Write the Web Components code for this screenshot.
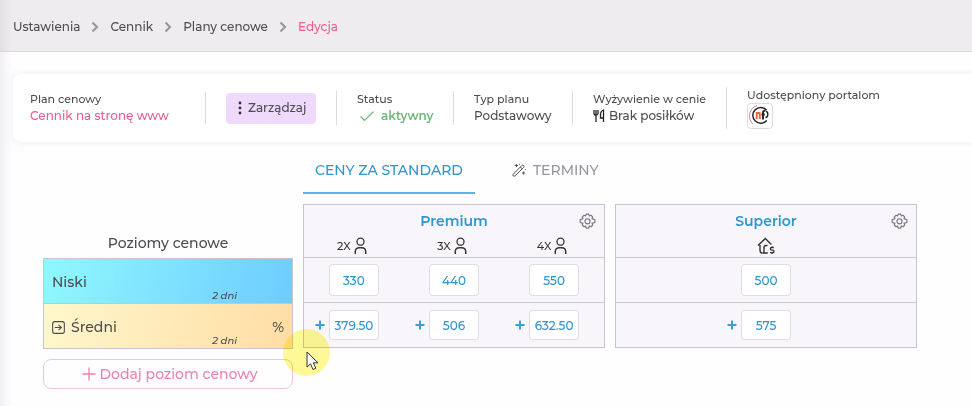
<!DOCTYPE html>
<html lang="pl">
<head>
<meta charset="utf-8">
<title>Edycja planu cenowego</title>
<style>
  body {
    margin: 0;
    min-height: 100vh;
    background: linear-gradient(90deg, #f0eef1, #fefdff 12px);
    color: #4c4b4f;
    font-family: Montserrat, Inter, "Noto Sans", sans-serif;
    font-size: 12px;
    line-height: 16px;
    --blue: #2f95cd;
    --pink: #ea5c90;
    --line: #c8c6cb;
  }
</style>
</head>
<body>
<price-page></price-page>
<script>
const ICONS = {
  chevron: ['0 0 8 12', 8, 12, '<path d="M1.500 1.500 6 6l-4.500 4.500" stroke="#96949a" stroke-width="2"/>'],
  dots: ['0 0 4 14', 4, 14, '<g fill="#333" stroke="none"><circle cx="2" cy="2" r="1.400"/><circle cx="2" cy="7" r="1.400"/><circle cx="2" cy="12" r="1.400"/></g>'],
  check: ['0 0 16 12', 16, 12, '<path d="m1.500 6.500 4 4L14.500 1.500" stroke-width="1.200"/>'],
  food: ['0 0 12 14', 12, 14, '<path d="M1 1v3.500Q1 6 3 6t2-1.500V1M3 1v12M10.500 13V1Q7.500 2 7.500 6v3h3" stroke-width="1.300" stroke="#222"/>'],
  enter: ['0 0 12 12', 13, 13, '<rect x=".6" y=".6" width="10.800" height="10.800" rx="2"/><path d="M2.500 6h6M6 3.500 8.700 6 6 8.500"/>'],
  plus: ['0 0 14 14', 14, 14, '<path d="M7 .5v13M.5 7h13" stroke-width="1.300"/>'],
  add: ['0 0 10 10', 10, 10, '<path d="M5 .5v9M.5 5h9" stroke-width="2"/>'],
  person: ['0 0 12 18', 13, 18, '<circle cx="6" cy="4.700" r="3.500" stroke-width="1.300"/><path d="M.8 17v-2.200q0-4 4-4h2.400q4 0 4 4V17" stroke-width="1.500"/>'],
  wand: ['0 0 14 14', 14, 14, '<path d="M1.200 11.300 9.800 2.500q1-.9 1.900 0t0 1.900L3.100 12.900q-1 .8-1.900 0t0-1.600ZM8.300 4l2 2M4.500 1v3M3 2.500h3M11.500 8.500v3M10 10h3M7.500.8v1M13 6.500h.8"/>'],
  gear: ['0 0 18 18', 17, 17, '<path d="M7.700 1.200h2.600l.7 2 1.700-.8 1.900 1.900-.8 1.700 3 1v3l-3 1 .8 1.700-1.900 1.900-1.700-.8-.7 2.200H7.700l-.7-2.200-1.700.8-1.900-1.900.8-1.700-3-1V7l3-1-.8-1.700 1.900-1.900 1.700.8Z" stroke-linejoin="round" stroke-width="1.200"/><circle cx="9" cy="8.800" r="2.700" stroke-width="1.200"/>'],
  house: ['0 0 18 18', 18, 18, '<path d="M1 8.500 8.300 1.500l6 6M3 8v5q0 3 2 3h.8M10.500 8.500H9q-2 0-2 2V14q0 2-1 2h4.800" stroke-width="1.400"/><path d="M16.800 10.500h-2q-1.500 0-1.500 1.300t1.500 1.300h.7q1.500 0 1.500 1.300t-1.500 1.300h-2.400M15.100 9.200v1.300M15.100 15.700V17" stroke-width="1.300"/>'],
  portal: ['0 0 24 24', 24, 24, '<path d="M9 1.500A11 11 0 0 0 5 20" stroke="#c98f83"/><path d="M18.600 6a8 7.800 0 1 0 .2 10.500" stroke="#29262a" stroke-width="1.500"/><path d="M8.700 15V8.500M11.800 15V9.500M8 9h4.500" stroke="#ed633b" stroke-width="1.900"/><path d="M15 15.500V8.500q0-2 2.500-1.800M13.500 10.500h3.300" stroke="#222" stroke-width="1.900"/><path d="M18 7.500q1.800 0 1.800 3t-2.300 3" stroke="#222" stroke-width="1.400"/>'],
  pointer: ['0 0 13 20', 13, 20, '<path d="M1 1v15l3.500-3.200L7 18.500l2.800-1.200-2.500-5.500H12Z" fill="#fff" stroke="#333"/>']
};

function define(name, css, html) {
  customElements.define(name, class extends HTMLElement {
    connectedCallback() {
      if (this.shadowRoot) return;
      const root = this.attachShadow({ mode: 'open' });
      root.innerHTML = `<style>*{box-sizing:border-box}${css}</style>` +
        (typeof html === 'function' ? html(this) : html);
    }
  });
}

define('ui-icon', ':host{display:inline-flex;flex:none}svg{display:block}', el => {
  const [box, w, h, body] = ICONS[el.getAttribute('name')];
  return `<svg viewBox="${box}" width="${w}" height="${h}" fill="none" stroke="currentColor" aria-hidden="true">${body}</svg>`;
});

define('crumb-bar', `
  :host{display:block;background:linear-gradient(90deg,#e1dfe2,#eeecef 12px);border-bottom:1px solid #dad8dc}
  nav{display:flex;align-items:center;gap:11px;height:51px;padding:2px 13px 0}
  a{color:inherit;text-decoration:none;font-weight:500}
  a[aria-current]{color:var(--pink)}`,
  el => `<nav aria-label="Nawigacja">${el.getAttribute('items').split('|').map((t, i, all) =>
    `<a href="#"${i === all.length - 1 ? ' aria-current="page"' : ''}>${t}</a>`).join('<ui-icon name="chevron"></ui-icon>')}</nav>`);

define('info-item', `
  :host{display:flex;align-items:center;flex:none;min-height:32px;padding-right:20px}
  :host(:not([first])){border-left:1px solid #dddbe0;padding-left:20px}
  .label{font-size:11px;line-height:16px;font-weight:500;white-space:nowrap}
  .value{display:flex;align-items:center;line-height:18px;white-space:nowrap}`,
  el => el.hasAttribute('label')
    ? `<div><div class="label">${el.getAttribute('label')}</div><div class="value"><slot></slot></div></div>`
    : '<slot></slot>');

define('plan-summary', `
  :host{display:flex;align-items:center;margin:22px 0 0 13px;padding:0 17px;min-height:68px;background:#fff;
    border-radius:8px 0 0 8px;box-shadow:0 0 6px 2px #f3f1f5}
  .plan{width:175px;color:inherit}
  .pink{color:var(--pink)} .green{color:#6eb87a;padding-left:2px;gap:6px;font-weight:600}
  .status{width:117px}.type{width:119px}.food{width:154px}
  span{display:flex;align-items:center;gap:4px;font-weight:500}
  button{display:flex;align-items:center;gap:6px;width:90px;height:31px;padding:0 0 0 12px;border:0;border-radius:4px;
    background:#efd9fd;color:inherit;font:inherit;font-weight:500}
  .portal{border:1px solid #dedbe0;border-radius:4px}`,
  `<info-item first class="plan" label="Plan cenowy"><span class="pink">Cennik na stronę www</span></info-item>
   <info-item><button type="button"><ui-icon name="dots"></ui-icon>Zarządzaj</button></info-item>
   <info-item class="status" label="Status"><span class="green"><ui-icon name="check"></ui-icon>aktywny</span></info-item>
   <info-item class="type" label="Typ planu"><span>Podstawowy</span></info-item>
   <info-item class="food" label="Wyżywienie w cenie"><span><ui-icon name="food"></ui-icon>Brak posiłków</span></info-item>
   <info-item label="Udostępniony portalom"><ui-icon class="portal" name="portal"></ui-icon></info-item>`);

define('tab-bar', `
  :host{display:flex;gap:25px}
  button{display:flex;align-items:center;gap:7px;height:46px;padding:0 12px;border:0;border-bottom:2px solid transparent;
    background:none;font:inherit;font-size:14px;font-weight:500;color:#98969b}
  button[aria-selected=true]{color:var(--blue);border-color:#59b5e6}
  ui-icon{color:#555}`,
  `<button type="button" role="tab" aria-selected="true">CENY ZA STANDARD</button>
   <button type="button" role="tab" aria-selected="false"><ui-icon name="wand"></ui-icon>TERMINY</button>`);

define('level-row', `
  :host{display:flex;align-items:center;position:relative;height:45px;padding:2px 8px 0;gap:6px;border-bottom:1px solid var(--line);font-size:14px;font-weight:500;
    background:linear-gradient(105deg,var(--from),var(--to))}
  .pct{margin-left:auto}
  small{position:absolute;right:55px;bottom:0;font-size:10px;line-height:14px;font-style:italic}`,
  el => `${el.hasAttribute('derived') ? '<ui-icon name="enter"></ui-icon>' : ''}<slot></slot>
    ${el.hasAttribute('derived') ? '<span class="pct">%</span>' : ''}<small>${el.getAttribute('days')}</small>`);

define('level-list', `
  :host{display:block}
  h2{margin:0;height:54px;padding-top:30px;font-size:14px;line-height:18px;font-weight:500;text-align:center}
  .rows{border:1px solid var(--line);border-bottom:0}
  button{display:flex;align-items:center;justify-content:center;gap:3px;width:100%;height:30px;margin-top:10px;padding:0 0 0 4px;
    border:1px solid #efc9da;border-radius:8px;background:none;color:#ee82ac;font:inherit;font-size:14px;font-weight:500}
  `,
  `<h2>Poziomy cenowe</h2>
   <div class="rows">
     <level-row days="2 dni" style="--from:#8ff8fe;--to:#6eccff">Niski</level-row>
     <level-row derived days="2 dni" style="--from:#fff7cc;--to:#ffdda4">Średni</level-row>
   </div>
   <button type="button"><ui-icon name="plus"></ui-icon>Dodaj poziom cenowy</button>`);

define('price-table', `
  :host{display:block;position:relative}
  table{width:100%;border-collapse:collapse;table-layout:fixed;background:#f8f6fa;border:1px solid var(--line)}
  th,td{padding:0;font-weight:400}
  tr.name th{height:31px;padding-top:2px;font-size:14px;color:var(--blue);font-weight:600}
  tr.size th{height:22px}
  tr.size span{display:flex;align-items:center;justify-content:center;gap:3px;padding-right:4px;font-size:11px;font-weight:500;color:#333}
  tr.size .unit{padding-right:0;gap:0}
  tbody tr{border-top:1px solid var(--line);height:45px}
  .cell{display:grid;grid-template-columns:1fr 50px 1fr;align-items:center;color:#39a1d6}
  .cell ui-icon{grid-column:1;justify-self:end;margin-right:4px}
  input{grid-column:2;width:50px;height:32px;padding:0;border:1px solid #e0dde3;border-radius:3px;background:#fff;
    color:var(--blue);font:inherit;font-weight:500;text-align:center}
  tr.derived input{height:30px}
  .gear{position:absolute;top:9px;right:9px;display:flex;padding:0;border:0;background:none;color:#77757a}`,
  el => {
    const name = el.getAttribute('name');
    const list = a => (el.getAttribute(a) || '').split(',');
    const sizes = list('sizes');
    const row = (attr, level, derived) => `<tr class="${derived ? 'derived' : ''}">${list(attr).map((v, i) =>
      `<td><div class="cell">${derived ? '<ui-icon name="add"></ui-icon>' : ''}<input value="${v}" aria-label="${name} ${sizes[i]} ${level}"></div></td>`).join('')}</tr>`;
    return `<table><thead><tr class="name"><th colspan="${sizes.length}">${name}</th></tr>
      <tr class="size">${sizes.map(s => `<th scope="col"><span class="${s ? '' : 'unit'}">${s}<ui-icon name="${s ? 'person' : 'house'}"></ui-icon></span></th>`).join('')}</tr></thead>
      <tbody>${row('low', 'Niski', false)}${row('mid', 'Średni', true)}</tbody></table>
      <button class="gear" type="button" aria-label="Ustawienia ${name}"><ui-icon name="gear"></ui-icon></button>`;
  });

define('mouse-pointer', `
  :host{position:absolute;left:283px;top:329px;width:47px;height:47px;pointer-events:none}
  i{position:absolute;inset:0;border-radius:50%;background:#fffb96;mix-blend-mode:multiply}
  ui-icon{position:absolute;left:23px;top:22px}`,
  '<i></i><ui-icon name="pointer"></ui-icon>');

define('price-page', `
  :host{display:block}
  main{display:grid;grid-template-columns:250px minmax(0,1fr) minmax(0,1fr);column-gap:10px;padding:6px 55px 16px 43px}
  tab-bar{grid-column:2/-1;margin-bottom:10px}`,
  `<crumb-bar items="Ustawienia|Cennik|Plany cenowe|Edycja"></crumb-bar>
   <plan-summary></plan-summary>
   <main>
     <tab-bar role="tablist"></tab-bar>
     <level-list></level-list>
     <price-table name="Premium" sizes="2X,3X,4X" low="330,440,550" mid="379.50,506,632.50"></price-table>
     <price-table name="Superior" sizes="" low="500" mid="575"></price-table>
   </main>
   <mouse-pointer></mouse-pointer>`);
</script>
</body>
</html>
